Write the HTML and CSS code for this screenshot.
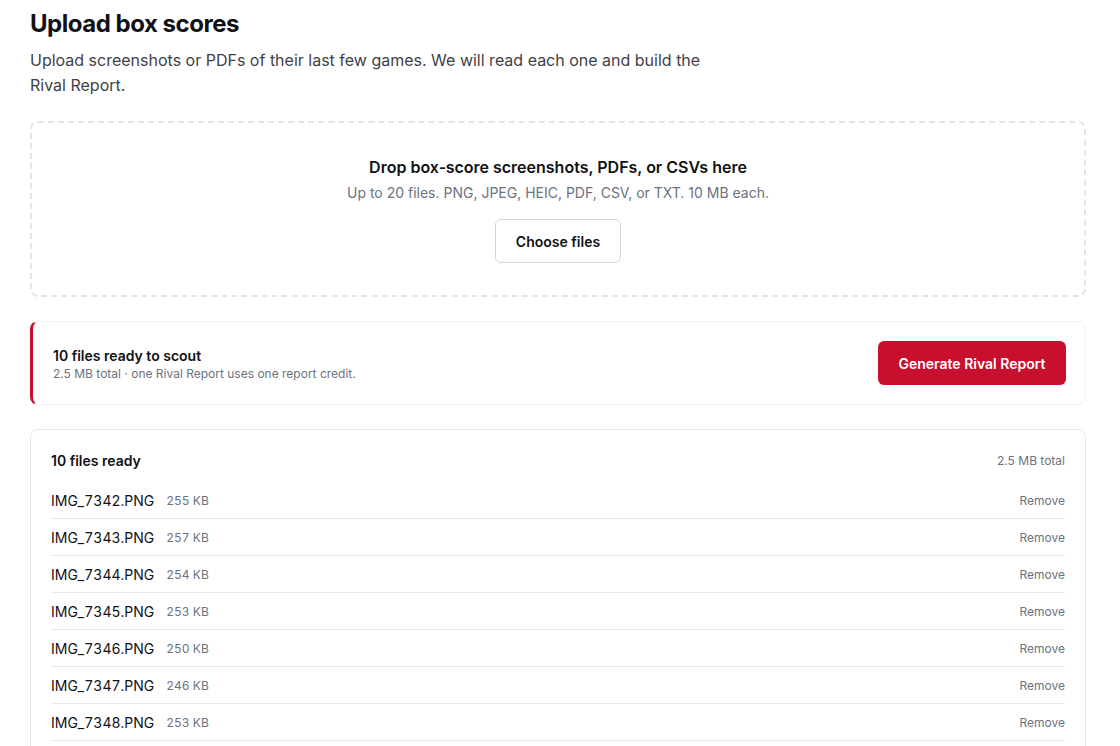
FILE: index.html
```html
<!DOCTYPE html>
<html>
<head>
<link rel="stylesheet" href="styles.css">
</head>
<body>

<div class="page">
    <h1 class="title">Upload box scores</h1>
    <p class="lead">Upload screenshots or PDFs of their last few games. We will read each one and build the Rival Report.</p>

    <div class="dropzone">
        <div class="drop-title">Drop box&#8209;score screenshots, PDFs, or CSVs here</div>
        <div class="drop-hint">Up to 20 files. PNG, JPEG, HEIC, PDF, CSV, or TXT. 10 MB each.</div>
        <button class="btn-outline">Choose files</button>
    </div>

    <div class="summary">
        <div class="summary-text">
            <div class="summary-title">10 files ready to scout</div>
            <div class="summary-sub">2.5 MB total · one Rival Report uses one report credit.</div>
        </div>
        <button class="btn-primary">Generate Rival Report</button>
    </div>

    <div class="files">
        <div class="files-head">
            <span class="files-title">10 files ready</span>
            <span class="files-total">2.5 MB total</span>
        </div>
        <ul class="file-list">
            <li class="file-row"><span class="file-name">IMG_7342.PNG</span><span class="file-size">255 KB</span><span class="file-remove">Remove</span></li>
            <li class="file-row"><span class="file-name">IMG_7343.PNG</span><span class="file-size">257 KB</span><span class="file-remove">Remove</span></li>
            <li class="file-row"><span class="file-name">IMG_7344.PNG</span><span class="file-size">254 KB</span><span class="file-remove">Remove</span></li>
            <li class="file-row"><span class="file-name">IMG_7345.PNG</span><span class="file-size">253 KB</span><span class="file-remove">Remove</span></li>
            <li class="file-row"><span class="file-name">IMG_7346.PNG</span><span class="file-size">250 KB</span><span class="file-remove">Remove</span></li>
            <li class="file-row"><span class="file-name">IMG_7347.PNG</span><span class="file-size">246 KB</span><span class="file-remove">Remove</span></li>
            <li class="file-row"><span class="file-name">IMG_7348.PNG</span><span class="file-size">253 KB</span><span class="file-remove">Remove</span></li>
            <li class="file-row"><span class="file-name">IMG_7349.PNG</span><span class="file-size">251 KB</span><span class="file-remove">Remove</span></li>
            <li class="file-row"><span class="file-name">IMG_7350.PNG</span><span class="file-size">249 KB</span><span class="file-remove">Remove</span></li>
            <li class="file-row"><span class="file-name">IMG_7351.PNG</span><span class="file-size">248 KB</span><span class="file-remove">Remove</span></li>
        </ul>
    </div>
</div>

</body>
</html>
```

FILE: styles.css
```css
* {
    box-sizing: border-box;
}

body {
    margin: 0;
    background: #fff;
    color: #111114;
    font-family: Inter, "Noto Sans", sans-serif;
}

.page {
    padding: 8px 34px 40px 30px;
}

.title {
    margin: 0 0 8px;
    font-size: 24px;
    line-height: 32px;
    font-weight: 700;
    letter-spacing: -0.02em;
}

.lead {
    margin: 0 0 23px;
    max-width: 690px;
    font-size: 16px;
    line-height: 25px;
    color: #3f3f46;
}

.dropzone {
    border: 2px dashed #e3e5e8;
    border-radius: 8px;
    padding: 34px 24px 32px;
    text-align: center;
}

.drop-title {
    font-size: 16px;
    line-height: 20px;
    font-weight: 600;
}

.drop-hint {
    margin-top: 6px;
    font-size: 14px;
    line-height: 20px;
    color: #6b7280;
}

.btn-outline {
    margin-top: 16px;
    height: 44px;
    padding: 0 20px;
    border: 1px solid #d4d6da;
    border-radius: 6px;
    background: #fff;
    font-family: inherit;
    font-size: 14px;
    font-weight: 600;
    color: #111114;
}

.summary {
    margin-top: 24px;
    display: flex;
    align-items: center;
    justify-content: space-between;
    padding: 19px 19px 19px 20px;
    border: 1px solid #f1f2f4;
    border-left: 3px solid #c8102e;
    border-radius: 8px;
}

.summary-text {
    padding-top: 2px;
}

.summary-title {
    font-size: 14px;
    line-height: 20px;
    font-weight: 600;
}

.summary-sub {
    font-size: 12px;
    line-height: 16px;
    color: #6b7280;
}

.btn-primary {
    height: 44px;
    width: 188px;
    border: none;
    border-radius: 6px;
    background: #c8102e;
    color: #fff;
    font-family: inherit;
    font-size: 14px;
    font-weight: 600;
}

.files {
    margin-top: 24px;
    border: 1px solid #e6e7ea;
    border-radius: 8px;
    padding: 20px 20px 0;
}

.files-head {
    display: flex;
    justify-content: space-between;
    align-items: center;
    height: 20px;
    margin-bottom: 12px;
}

.files-title {
    font-size: 14px;
    font-weight: 600;
}

.files-total {
    font-size: 12px;
    color: #6b7280;
}

.file-list {
    list-style: none;
    margin: 0;
    padding: 0;
}

.file-row {
    display: flex;
    align-items: center;
    height: 37px;
    border-bottom: 1px solid #e6e7ea;
    font-variant-numeric: tabular-nums;
}

.file-name {
    font-size: 14px;
}

.file-size {
    margin-left: 12px;
    font-size: 12px;
    color: #6b7280;
}

.file-remove {
    margin-left: auto;
    font-size: 12px;
    color: #6b7280;
}
```
